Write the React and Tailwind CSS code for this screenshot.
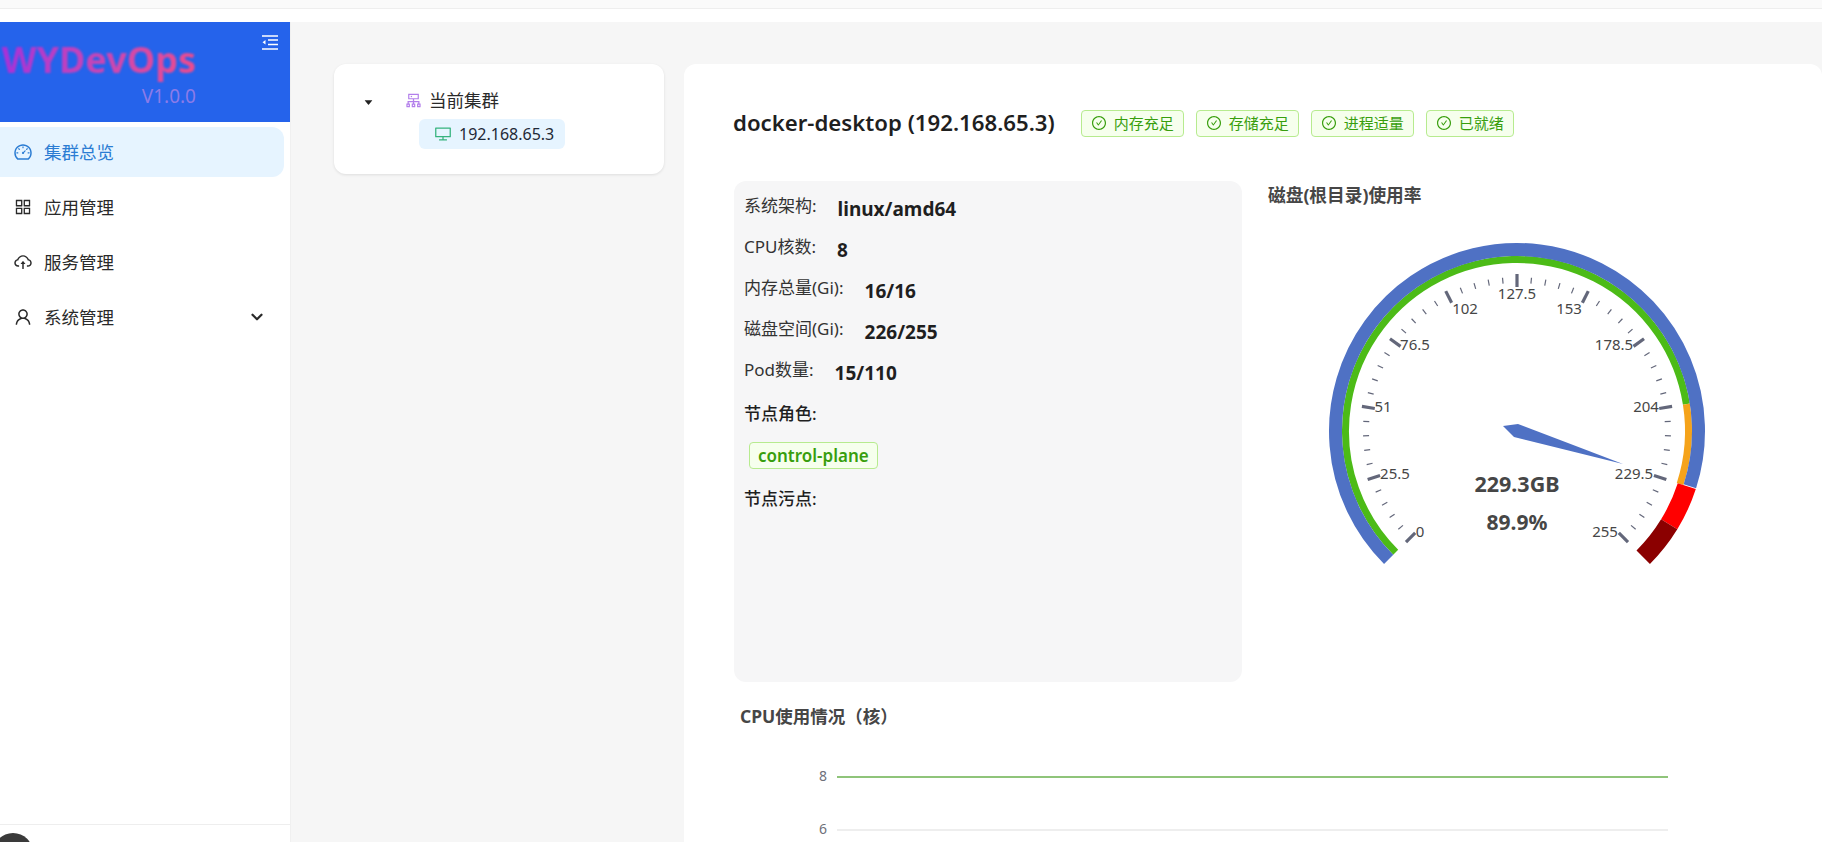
import {
  AiOutlineAppstore,
  AiOutlineCheckCircle,
  AiOutlineCloudUpload,
  AiOutlineCluster,
  AiOutlineDashboard,
  AiOutlineDesktop,
  AiOutlineUser,
  AiFillCaretDown,
} from "react-icons/ai";
import { LuChevronDown } from "react-icons/lu";

const CX = 1517;
const CY = 431;

const point = (f, r) => {
  const a = ((225 - 270 * f) * Math.PI) / 180;
  return [CX + r * Math.cos(a), CY - r * Math.sin(a)];
};

const arc = (from, to, r) => {
  const [x1, y1] = point(from, r);
  const [x2, y2] = point(to, r);
  const large = (to - from) * 270 > 180 ? 1 : 0;
  return `M${x1} ${y1} A${r} ${r} 0 ${large} 1 ${x2} ${y2}`;
};

const labels = [
  ["0", 1420, 532],
  ["25.5", 1395, 474],
  ["51", 1383, 407],
  ["76.5", 1415, 345],
  ["102", 1465, 309],
  ["127.5", 1517, 294],
  ["153", 1569, 309],
  ["178.5", 1614, 345],
  ["204", 1646, 407],
  ["229.5", 1634, 474],
  ["255", 1605, 532],
];

const Gauge = () => {
  const ticks = [];
  for (let i = 0; i <= 50; i++) {
    const major = i % 5 === 0;
    const [x1, y1] = point(i / 50, major ? 144 : 148);
    const [x2, y2] = point(i / 50, major ? 157 : 154);
    ticks.push(
      <line key={i} x1={x1} y1={y1} x2={x2} y2={y2} stroke="#63677a" strokeWidth={major ? 3.2 : 1.2} />
    );
  }
  return (
    <svg className="block" width="500" height="400" viewBox="1268 210 500 400">
      <path d={arc(0, 0.8, 171.5)} fill="none" stroke="#4cbb17" strokeWidth="7" />
      <path d={arc(0.8, 0.9, 171.5)} fill="none" stroke="#f5a31a" strokeWidth="7" />
      <path d={arc(0, 0.899, 181.5)} fill="none" stroke="#4f71c4" strokeWidth="13" />
      <path d={arc(0.9, 0.95, 178.5)} fill="none" stroke="#ff0000" strokeWidth="19" />
      <path d={arc(0.95, 1, 178.5)} fill="none" stroke="#8b0000" strokeWidth="19" />
      {ticks}
      {labels.map(([t, x, y]) => (
        <text key={t} x={x} y={y + 5} textAnchor="middle" fontSize="15" fill="#464646">
          {t}
        </text>
      ))}
      <polygon points="1623,464 1518,424 1503,426 1514,437" fill="#4f71c4" />
      <text x={CX} y="492" textAnchor="middle" fontSize="21.5" fontWeight="700" fill="#464646">
        229.3GB
      </text>
      <text x={CX} y="530" textAnchor="middle" fontSize="21" fontWeight="700" fill="#464646">
        89.9%
      </text>
    </svg>
  );
};

const CpuChart = () => (
  <svg className="block mt-[6px]" width="1040" height="110" viewBox="734 732 1040 110">
    <line x1="837" y1="776" x2="1668" y2="776" stroke="#8fc47a" strokeWidth="2" />
    <line x1="837" y1="829" x2="1668" y2="829" stroke="#e8e8e8" strokeWidth="1.5" />
    <text x="823" y="780" textAnchor="middle" fontSize="14" fill="#6e7079">8</text>
    <text x="823" y="833" textAnchor="middle" fontSize="14" fill="#6e7079">6</text>
  </svg>
);

const NavItem = ({ icon, label, active, arrow }) => (
  <div
    className={`flex items-center h-[50px] w-[284px] pl-[13px] mb-[5px] rounded-r-xl text-[17.5px] ${
      active ? "bg-[#e6f4ff] text-[#2b7cd3]" : "text-[#2a2a2a]"
    }`}
  >
    <span className="text-[20px] w-[31px]">{icon}</span>
    <span className="flex-1">{label}</span>
    {arrow && <LuChevronDown className="text-lg mr-[18px] stroke-[3]" />}
  </div>
);

const Tag = ({ children }) => (
  <span className="flex items-center gap-[7px] h-[27px] px-[9px] rounded-[4px] border border-[#b7eb8f] bg-[#f6ffed] text-[#389e0d] text-[15px]">
    <AiOutlineCheckCircle className="text-[16px]" />
    {children}
  </span>
);

const InfoRow = ({ label, value }) => (
  <div className="flex items-center gap-[21px] h-[41px] text-[17px] text-[#333]">
    <span className="pb-[5px]">{label}</span>
    {value && <span className="text-[19px] font-bold text-[#1f1f1f] pt-[2px]">{value}</span>}
  </div>
);

export default function App() {
  return (
    <div className="w-[1822px] h-[842px] overflow-hidden bg-white flex flex-col font-['Noto_Sans','Noto_Sans_CJK_SC',sans-serif]">
      <div className="h-[9px] shrink-0 bg-[#fafafa] border-b border-[#eeeeee]" />
      <div className="h-[13px] shrink-0 bg-white" />
      <div className="flex flex-1 min-h-0">
        <aside className="w-[291px] shrink-0 flex flex-col bg-white border-r border-[#f0f0f0]">
          <div className="relative h-[100px] shrink-0 bg-[#2563eb]">
            <div className="w-[196px] text-right pt-[15px]">
              <div className="text-[36px] leading-[46px] font-bold blur-[0.8px] bg-linear-to-r from-[#a82fd8] to-[#ee4b8c] bg-clip-text text-transparent whitespace-nowrap">
                WYDevOps
              </div>
              <div className="text-[19px] leading-6 mt-[1px] text-[#8b7be8]">V1.0.0</div>
            </div>
            <svg className="absolute right-[12px] top-[13px]" width="16" height="15" viewBox="0 0 16 15" fill="none" stroke="#fff" strokeWidth="1.4">
              <path d="M0 1h16M6 5h10M6 9.5h10M0 14h16" />
              <path d="M3.5 5 L0.5 7.2 L3.5 9.5 Z" fill="#fff" stroke="none" />
            </svg>
          </div>
          <nav className="flex-1 pt-[5px]">
            <NavItem active icon={<AiOutlineDashboard />} label="集群总览" />
            <NavItem icon={<AiOutlineAppstore />} label="应用管理" />
            <NavItem icon={<AiOutlineCloudUpload />} label="服务管理" />
            <NavItem arrow icon={<AiOutlineUser />} label="系统管理" />
          </nav>
          <div className="h-[18px] shrink-0 border-t border-[#eeeeee] overflow-hidden pt-[8px]">
            <div className="w-10 h-10 -ml-[7px] rounded-full bg-[#3a3a3a]" />
          </div>
        </aside>

        <main className="flex-1 min-w-0 bg-[#f6f6f6] flex items-start gap-[20px] pl-[43px] pt-[42px] overflow-hidden">
          <div className="w-[330px] h-[110px] shrink-0 bg-white rounded-xl shadow-[0_1px_3px_rgba(0,0,0,0.1)]">
            <div className="flex items-center h-[30px] mt-[21px] pl-[29px] text-[17.5px] text-[#2a2a2a]">
              <AiFillCaretDown className="text-[11px] text-[#222] mt-1" />
              <AiOutlineCluster className="text-[19px] text-[#b37feb] ml-[30px] mr-[6px]" />
              当前集群
            </div>
            <div className="flex items-center w-[146px] h-[30px] mt-[4px] ml-[85px] pl-[15px] gap-[7px] rounded-md bg-[#e6f4ff] text-base text-[#1f2937]">
              <AiOutlineDesktop className="text-[18px] text-[#36b37e]" />
              192.168.65.3
            </div>
          </div>

          <div className="flex-1 min-w-0 h-[900px] bg-white rounded-tl-xl rounded-tr-xl pl-[50px] pt-[44px]">
            <div className="flex items-center h-[30px] -ml-[1px]">
              <h1 className="text-[22.2px] font-semibold text-[#1f1f1f] mr-[26px] whitespace-nowrap">docker-desktop (192.168.65.3)</h1>
              <div className="flex gap-[12px]">
                <Tag>内存充足</Tag>
                <Tag>存储充足</Tag>
                <Tag>进程适量</Tag>
                <Tag>已就绪</Tag>
              </div>
            </div>

            <div className="flex mt-[43px]">
              <div className="w-[508px] h-[501px] shrink-0 bg-[#f6f6f7] rounded-xl pl-[10px] pt-[7px]">
                <InfoRow label="系统架构:" value="linux/amd64" />
                <InfoRow label="CPU核数:" value="8" />
                <InfoRow label="内存总量(Gi):" value="16/16" />
                <InfoRow label="磁盘空间(Gi):" value="226/255" />
                <InfoRow label="Pod数量:" value="15/110" />
                <div className="h-[41px] flex items-center text-[17px] font-medium text-[#1f1f1f]">节点角色:</div>
                <div className="pl-[5px] pt-[8px] h-[44px]">
                  <span className="inline-flex items-center h-[27px] px-[8px] rounded-[4px] border border-[#b7eb8f] bg-[#f6ffed] text-[#389e0d] text-[17px] font-semibold">
                    control-plane
                  </span>
                </div>
                <div className="h-[41px] flex items-center text-[17px] font-medium text-[#1f1f1f]">节点污点:</div>
              </div>
              <div className="ml-[26px]">
                <div className="h-[29px] flex items-center text-[17.7px] font-bold text-[#464646]">磁盘(根目录)使用率</div>
                <Gauge />
              </div>
            </div>

            <div className="mt-[23px] pl-[6px] text-[17.5px] font-bold text-[#464646] leading-[22px]">CPU使用情况（核）</div>
            <CpuChart />
          </div>
        </main>
      </div>
    </div>
  );
}
